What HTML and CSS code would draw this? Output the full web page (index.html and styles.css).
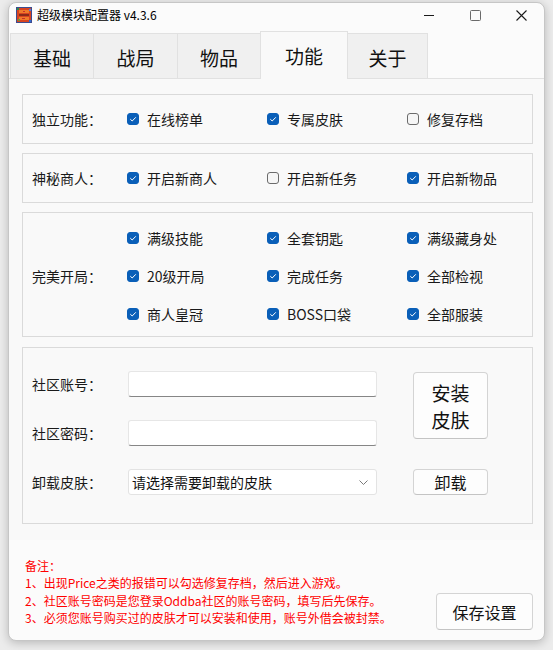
FILE: index.html
```html
<!DOCTYPE html>
<html lang="zh-CN">
<head>
<meta charset="utf-8">
<title>超级模块配置器 v4.3.6</title>
<link rel="stylesheet" href="styles.css">
</head>
<body>
<div class="window">
  <div class="titlebar">
    <svg class="app-icon" width="16" height="16" viewBox="0 0 16 16">
      <rect x="0" y="0" width="16" height="16" fill="#3b4b8f"/>
      <rect x="1" y="1" width="14" height="14" fill="#d8431f"/>
      <rect x="3" y="3" width="10" height="3" fill="#f07a2a"/>
      <rect x="3" y="7" width="10" height="2" fill="#8a2a1a"/>
      <rect x="3" y="10" width="10" height="3" fill="#f07a2a"/>
      <rect x="1" y="1" width="2" height="2" fill="#2f8a4a"/>
      <rect x="13" y="13" width="2" height="2" fill="#2f6ad0"/>
      <rect x="13" y="2" width="2" height="2" fill="#5a7ad0"/>
      <rect x="2" y="12" width="2" height="2" fill="#6a9a3a"/>
      <rect x="7" y="4" width="2" height="1" fill="#c8302a"/>
      <rect x="6" y="11" width="3" height="1" fill="#c8302a"/>
    </svg>
    <span class="title">超级模块配置器 v4.3.6</span>
    <div class="caption">
      <span class="cap-btn"><svg width="10" height="10" viewBox="0 0 10 10"><line x1="0" y1="5.5" x2="10" y2="5.5" stroke="#1a1a1a" stroke-width="1"/></svg></span>
      <span class="cap-btn"><svg width="11" height="11" viewBox="0 0 11 11"><rect x="0.5" y="0.5" width="10" height="10" rx="1" fill="none" stroke="#6a6a6a" stroke-width="1"/></svg></span>
      <span class="cap-btn"><svg width="11" height="11" viewBox="0 0 11 11"><path d="M0.5 0.5 L10.5 10.5 M10.5 0.5 L0.5 10.5" stroke="#1a1a1a" stroke-width="1.1" fill="none"/></svg></span>
    </div>
  </div>

  <div class="tabs">
    <div class="tab t1">基础</div>
    <div class="tab t2">战局</div>
    <div class="tab t3">物品</div>
    <div class="tab t4 active">功能</div>
    <div class="tab t5">关于</div>
  </div>

  <div class="tabpage">
    <div class="group line-group">
      <div class="glabel">独立功能：</div>
      <div class="chk"><span class="box on"><svg viewBox="0 0 12 12"><polyline points="3.3,6.2 5.2,8 8.8,4.3"/></svg></span>在线榜单</div>
      <div class="chk"><span class="box on"><svg viewBox="0 0 12 12"><polyline points="3.3,6.2 5.2,8 8.8,4.3"/></svg></span>专属皮肤</div>
      <div class="chk"><span class="box"></span>修复存档</div>
    </div>

    <div class="group line-group g2">
      <div class="glabel">神秘商人：</div>
      <div class="chk"><span class="box on"><svg viewBox="0 0 12 12"><polyline points="3.3,6.2 5.2,8 8.8,4.3"/></svg></span>开启新商人</div>
      <div class="chk"><span class="box"></span>开启新任务</div>
      <div class="chk"><span class="box on"><svg viewBox="0 0 12 12"><polyline points="3.3,6.2 5.2,8 8.8,4.3"/></svg></span>开启新物品</div>
    </div>

    <div class="group multi-group">
      <div class="glabel span3">完美开局：</div>
      <div class="chk"><span class="box on"><svg viewBox="0 0 12 12"><polyline points="3.3,6.2 5.2,8 8.8,4.3"/></svg></span>满级技能</div>
      <div class="chk"><span class="box on"><svg viewBox="0 0 12 12"><polyline points="3.3,6.2 5.2,8 8.8,4.3"/></svg></span>全套钥匙</div>
      <div class="chk"><span class="box on"><svg viewBox="0 0 12 12"><polyline points="3.3,6.2 5.2,8 8.8,4.3"/></svg></span>满级藏身处</div>
      <div class="chk"><span class="box on"><svg viewBox="0 0 12 12"><polyline points="3.3,6.2 5.2,8 8.8,4.3"/></svg></span>20级开局</div>
      <div class="chk"><span class="box on"><svg viewBox="0 0 12 12"><polyline points="3.3,6.2 5.2,8 8.8,4.3"/></svg></span>完成任务</div>
      <div class="chk"><span class="box on"><svg viewBox="0 0 12 12"><polyline points="3.3,6.2 5.2,8 8.8,4.3"/></svg></span>全部检视</div>
      <div class="chk"><span class="box on"><svg viewBox="0 0 12 12"><polyline points="3.3,6.2 5.2,8 8.8,4.3"/></svg></span>商人皇冠</div>
      <div class="chk"><span class="box on"><svg viewBox="0 0 12 12"><polyline points="3.3,6.2 5.2,8 8.8,4.3"/></svg></span>BOSS口袋</div>
      <div class="chk"><span class="box on"><svg viewBox="0 0 12 12"><polyline points="3.3,6.2 5.2,8 8.8,4.3"/></svg></span>全部服装</div>
    </div>

    <div class="group form-group">
      <div class="flabel r1">社区账号：</div>
      <input class="field r1" type="text">
      <div class="flabel r2">社区密码：</div>
      <input class="field r2" type="password">
      <button class="btn install">安装<br>皮肤</button>
      <div class="flabel r3">卸载皮肤：</div>
      <div class="select r3">
        <span>请选择需要卸载的皮肤</span>
        <svg width="9" height="5" viewBox="0 0 9 5"><polyline points="0.5,0.5 4.5,4.5 8.5,0.5" fill="none" stroke="#7a7a7a" stroke-width="1"/></svg>
      </div>
      <button class="btn uninstall">卸载</button>
    </div>
  </div>

  <div class="footer">
    <div class="notes">
      <div>备注：</div>
      <div>1、出现Price之类的报错可以勾选修复存档，然后进入游戏。</div>
      <div>2、社区账号密码是您登录Oddba社区的账号密码，填写后先保存。</div>
      <div>3、必须您账号购买过的皮肤才可以安装和使用，账号外借会被封禁。</div>
    </div>
    <button class="btn save">保存设置</button>
  </div>
</div>
</body>
</html>
```

FILE: styles.css
```css
html, body {
  margin: 0;
  padding: 0;
}
body {
  width: 553px;
  height: 650px;
  overflow: hidden;
  background: #ececec;
  font-family: "Noto Sans CJK SC", "Noto Sans", sans-serif;
  color: #1a1a1a;
}
.window {
  box-sizing: border-box;
  width: 537px;
  height: 639px;
  margin: 2px 0 0 8px;
  background: #fbfbfb;
  border: 1px solid #c6c6c6;
  border-radius: 8px;
  box-shadow: 0 2px 10px rgba(0, 0, 0, 0.22);
  display: flex;
  flex-direction: column;
  overflow: hidden;
}

/* title bar */
.titlebar {
  height: 28px;
  display: flex;
  align-items: flex-start;
  padding-left: 7px;
  flex: none;
}
.app-icon {
  margin-top: 4px;
  flex: none;
}
.title {
  margin: 4px 0 0 5px;
  font-size: 12px;
  line-height: 16px;
  color: #000;
  white-space: nowrap;
}
.caption {
  margin-left: auto;
  display: flex;
}
.cap-btn {
  width: 46px;
  height: 24px;
  display: flex;
  align-items: center;
  justify-content: center;
}

/* tabs */
.tabs {
  height: 47px;
  display: flex;
  align-items: flex-end;
  padding-left: 1px;
  flex: none;
}
.tab {
  box-sizing: border-box;
  height: 45px;
  background: #f0f0f0;
  border: 1px solid #e1e1e1;
  border-bottom: none;
  margin-left: -1px;
  display: flex;
  align-items: center;
  justify-content: center;
  padding-top: 3px;
  font-size: 19px;
  line-height: 24px;
  color: #111;
}
.tab.t1 { width: 84px; margin-left: 0; }
.tab.t2 { width: 85px; }
.tab.t3 { width: 84px; }
.tab.t4 { width: 88px; }
.tab.t5 { width: 81px; }
.tab.active {
  height: 48px;
  margin-bottom: -1px;
  background: #f9f9f9;
  position: relative;
  z-index: 1;
  padding-top: 0;
}

/* tab page */
.tabpage {
  flex: none;
  background: #f9f9f9;
  border-top: 1px solid #e1e1e1;
  padding: 15px 11px 16px 13px;
}
.group {
  box-sizing: border-box;
  border: 1px solid #dadada;
  font-size: 14px;
}
.line-group {
  height: 50px;
  display: grid;
  grid-template-columns: 95px 140px 140px 1fr;
  align-items: center;
  padding-left: 9px;
}
.g2 {
  margin-top: 9px;
}
.multi-group {
  margin-top: 9px;
  height: 125px;
  display: grid;
  grid-template-columns: 95px 140px 140px 1fr;
  grid-template-rows: 24px 24px 24px;
  row-gap: 14px;
  align-items: center;
  padding: 13px 0 10px 9px;
}
.span3 {
  grid-row: 1 / 4;
  grid-column: 1;
}
.glabel, .flabel {
  line-height: 20px;
  white-space: nowrap;
}
.chk {
  display: flex;
  align-items: center;
  gap: 8px;
  line-height: 24px;
  white-space: nowrap;
}
.box {
  box-sizing: border-box;
  width: 12px;
  height: 12px;
  border-radius: 3px;
  border: 1px solid #6b6b6b;
  background: #f6f6f6;
  flex: none;
  display: block;
}
.box.on {
  background: #0a5fb8;
  border-color: #0a5fb8;
}
.box svg {
  display: block;
  width: 12px;
  height: 12px;
  margin: -1px;
}
.box svg polyline {
  fill: none;
  stroke: #ffffff;
  stroke-width: 1;
}

/* form group */
.form-group {
  margin-top: 10px;
  height: 177px;
  display: grid;
  grid-template-columns: 96px 249px 36px 75px;
  grid-template-rows: 26px 26px 26px;
  row-gap: 23px;
  align-items: center;
  padding: 23px 0 28px 9px;
}
.r1 { grid-row: 1; }
.r2 { grid-row: 2; }
.r3 { grid-row: 3; }
.flabel { grid-column: 1; }
.field {
  grid-column: 2;
  box-sizing: border-box;
  width: 249px;
  height: 26px;
  margin: 0;
  background: #ffffff;
  border: 1px solid #e6e6e6;
  border-bottom-color: #868686;
  border-radius: 3px;
  outline: none;
}
.select {
  grid-column: 2;
  box-sizing: border-box;
  height: 26px;
  background: #ffffff;
  border: 1px solid #e3e3e3;
  border-radius: 3px;
  display: flex;
  align-items: center;
  padding: 0 8px 0 3px;
  font-size: 14px;
  color: #111;
  white-space: nowrap;
}
.select svg {
  margin-left: auto;
}
.btn {
  box-sizing: border-box;
  background: #fdfdfd;
  border: 1px solid #d4d4d4;
  border-bottom-color: #c4c4c4;
  border-radius: 4px;
  font-family: "Noto Sans CJK SC", "Noto Sans", sans-serif;
  color: #111;
  padding: 0;
  margin: 0;
}
.install {
  grid-column: 4;
  grid-row: 1 / 3;
  align-self: start;
  margin-top: 1px;
  height: 67px;
  font-size: 19px;
  line-height: 27px;
}
.uninstall {
  grid-column: 4;
  grid-row: 3;
  height: 26px;
  font-size: 16px;
  line-height: 20px;
}

/* footer */
.footer {
  flex: 1;
  display: flex;
  justify-content: space-between;
  align-items: flex-end;
  padding: 17px 11px 10px 16px;
}
.notes {
  align-self: flex-start;
  font-size: 12px;
  line-height: 17.33px;
  color: #ff0000;
  white-space: nowrap;
}
.save {
  width: 97px;
  height: 37px;
  font-size: 16px;
  line-height: 20px;
}
```
